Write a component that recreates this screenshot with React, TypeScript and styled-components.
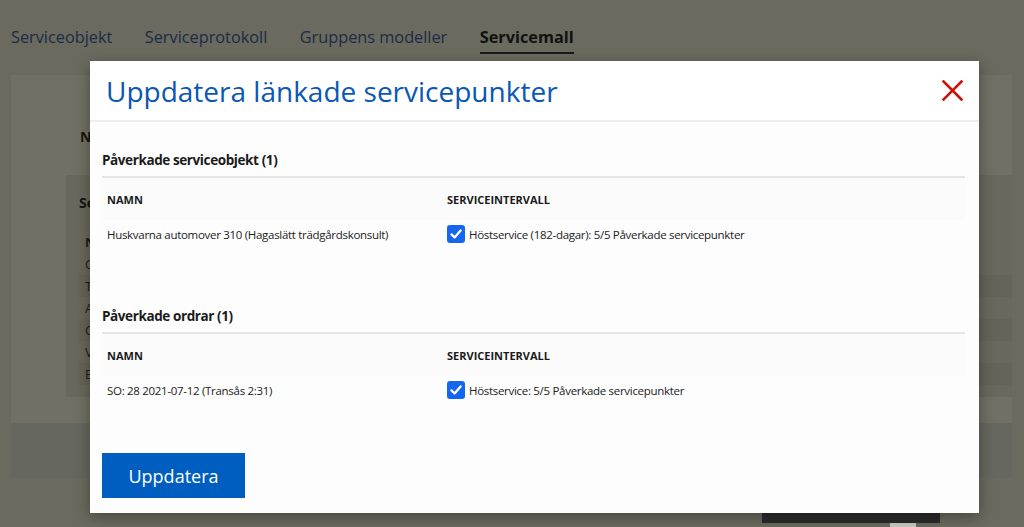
import React from "react";
import styled, { createGlobalStyle } from "styled-components";

const GlobalStyle = createGlobalStyle`
  html, body {
    margin: 0;
    padding: 0;
    width: 1024px;
    height: 527px;
    overflow: hidden;
    background: #6a6a5e;
    font-family: "Open Sans", "Liberation Sans", sans-serif;
  }
  * { box-sizing: border-box; }
`;

const Page = styled.div`
  position: relative;
  width: 1024px;
  height: 527px;
  overflow: hidden;
`;

const Nav = styled.nav`
  display: flex;
  gap: 32.5px;
  padding: 25px 0 0 11px;
  height: 75px;
`;

const Tab = styled.div<{ $active?: boolean }>`
  font-size: 16.3px;
  line-height: 24px;
  height: 29px;
  color: ${(p) => (p.$active ? "#111" : "#1c2b48")};
  font-weight: ${(p) => (p.$active ? 700 : 400)};
  border-bottom: 2px solid ${(p) => (p.$active ? "#1a1a1a" : "transparent")};
`;

const Card = styled.div`
  margin: 0 12px 0 11px;
  height: 403px;
  background: #707064;
  display: flex;
  flex-direction: column;
`;

const CardLabel = styled.div`
  font-size: 14px;
  font-weight: 700;
  color: #161610;
  padding: 52px 0 0 69px;
  height: 100px;
`;

const InnerPanel = styled.div`
  margin-left: 55px;
  height: 222px;
  background: #68685c;
  padding: 18px 0 0 13px;
`;

const InnerTitle = styled.div`
  font-size: 14px;
  font-weight: 700;
  color: #161610;
  height: 38px;
`;

const BgRow = styled.div<{ $striped?: boolean; $bold?: boolean }>`
  height: 22px;
  font-size: 13px;
  line-height: 22px;
  padding-left: 6px;
  color: #1d1d18;
  background: ${(p) => (p.$striped ? "#646458" : "transparent")};
  font-weight: ${(p) => (p.$bold ? 700 : 400)};
`;

const CardFooter = styled.div`
  margin-top: 26px;
  flex: 1;
  background: #66685f;
`;

const Toast = styled.div`
  position: absolute;
  left: 762px;
  top: 503px;
  width: 178px;
  height: 20px;
  background: #2b2b2b;
`;

const ToastTab = styled.div`
  position: absolute;
  left: 890px;
  top: 523px;
  width: 26px;
  height: 4px;
  background: #c8c8c0;
`;

const Modal = styled.div`
  position: absolute;
  left: 90px;
  top: 61px;
  width: 889px;
  height: 452px;
  background: #fdfdfd;
  box-shadow: 0 4px 14px rgba(0, 0, 0, 0.35);
  display: flex;
  flex-direction: column;
`;

const ModalHeader = styled.div`
  height: 61px;
  display: flex;
  align-items: center;
  justify-content: space-between;
  padding: 0 16px 0 16px;
  border-bottom: 2px solid #eeeeee;
  background: #ffffff;
`;

const Title = styled.h1`
  margin: 0;
  font-size: 28px;
  font-weight: 400;
  color: #0a57b4;
  line-height: 36px;
`;

const CloseButton = styled.button`
  border: none;
  background: none;
  padding: 0;
  width: 22px;
  height: 22px;
  display: flex;
  align-items: center;
  justify-content: center;
  cursor: pointer;
`;

const ModalBody = styled.div`
  flex: 1;
  padding: 28px 14px 15px 12px;
  display: flex;
  flex-direction: column;
`;

const Section = styled.section<{ $gap?: number }>`
  margin-bottom: ${(p) => p.$gap ?? 0}px;
`;

const SectionTitle = styled.h2`
  margin: 0;
  font-size: 13.5px;
  letter-spacing: -0.4px;
  font-weight: 700;
  line-height: 20px;
  color: #1b1b1b;
  padding-bottom: 6px;
  border-bottom: 2px solid #e5e5e5;
`;

const Table = styled.div`
  display: grid;
  grid-template-columns: 340px 1fr;
`;

const HeadCell = styled.div`
  height: 42px;
  display: flex;
  align-items: center;
  padding-left: 5px;
  font-size: 11px;
  font-weight: 700;
  color: #1b1b1b;
  text-transform: uppercase;
  background: #fbfbfb;
`;

const Cell = styled.div`
  height: 28px;
  display: flex;
  align-items: center;
  gap: 4px;
  padding-left: 5px;
  font-size: 11.5px;
  letter-spacing: -0.3px;
  color: #222;
`;

const Check = styled.span`
  width: 18px;
  height: 18px;
  border-radius: 3px;
  background: #1466f0;
  display: inline-flex;
  align-items: center;
  justify-content: center;
  flex: none;
`;

const Footer = styled.div`
  margin-top: auto;
`;

const PrimaryButton = styled.button`
  width: 143px;
  height: 45px;
  border: none;
  background: #005ec0;
  color: #ffffff;
  font-family: "Open Sans", "Liberation Sans", sans-serif;
  font-size: 18px;
  font-weight: 400;
  cursor: pointer;
`;

const CheckIcon = () => (
  <svg width="14" height="14" viewBox="0 0 14 14">
    <path d="M2.5 7.4 L5.6 10.4 L11.6 3.4" fill="none" stroke="#fff" strokeWidth="2.3" strokeLinecap="round" strokeLinejoin="round" />
  </svg>
);

const CloseIcon = () => (
  <svg width="21" height="21" viewBox="0 0 21 21">
    <path d="M1.5 1.5 L19.5 19.5 M19.5 1.5 L1.5 19.5" stroke="#c8120a" strokeWidth="2.6" strokeLinecap="square" />
  </svg>
);

type Row = { name: string; interval: string };

const Affected = ({ title, row, gap }: { title: string; row: Row; gap?: number }) => (
  <Section $gap={gap}>
    <SectionTitle>{title}</SectionTitle>
    <Table>
      <HeadCell>Namn</HeadCell>
      <HeadCell>Serviceintervall</HeadCell>
      <Cell>{row.name}</Cell>
      <Cell>
        <Check>
          <CheckIcon />
        </Check>
        {row.interval}
      </Cell>
    </Table>
  </Section>
);

const bgRows = ["C", "T", "A", "C", "V", "E"];

export default function App() {
  return (
    <>
      <GlobalStyle />
      <Page>
        <Nav>
          <Tab>Serviceobjekt</Tab>
          <Tab>Serviceprotokoll</Tab>
          <Tab>Gruppens modeller</Tab>
          <Tab $active>Servicemall</Tab>
        </Nav>
        <Card>
          <CardLabel>N</CardLabel>
          <InnerPanel>
            <InnerTitle>Se</InnerTitle>
            <BgRow $bold>N</BgRow>
            {bgRows.map((r, i) => (
              <BgRow key={i} $striped={i % 2 === 1}>
                {r}
              </BgRow>
            ))}
          </InnerPanel>
          <CardFooter />
        </Card>
        <Toast />
        <ToastTab />
        <Modal>
          <ModalHeader>
            <Title>Uppdatera länkade servicepunkter</Title>
            <CloseButton aria-label="Stäng">
              <CloseIcon />
            </CloseButton>
          </ModalHeader>
          <ModalBody>
            <Affected
              title="Påverkade serviceobjekt (1)"
              gap={58}
              row={{
                name: "Huskvarna automover 310 (Hagaslätt trädgårdskonsult)",
                interval: "Höstservice (182-dagar): 5/5 Påverkade servicepunkter",
              }}
            />
            <Affected
              title="Påverkade ordrar (1)"
              row={{
                name: "SO: 28 2021-07-12 (Transås 2:31)",
                interval: "Höstservice: 5/5 Påverkade servicepunkter",
              }}
            />
            <Footer>
              <PrimaryButton>Uppdatera</PrimaryButton>
            </Footer>
          </ModalBody>
        </Modal>
      </Page>
    </>
  );
}
